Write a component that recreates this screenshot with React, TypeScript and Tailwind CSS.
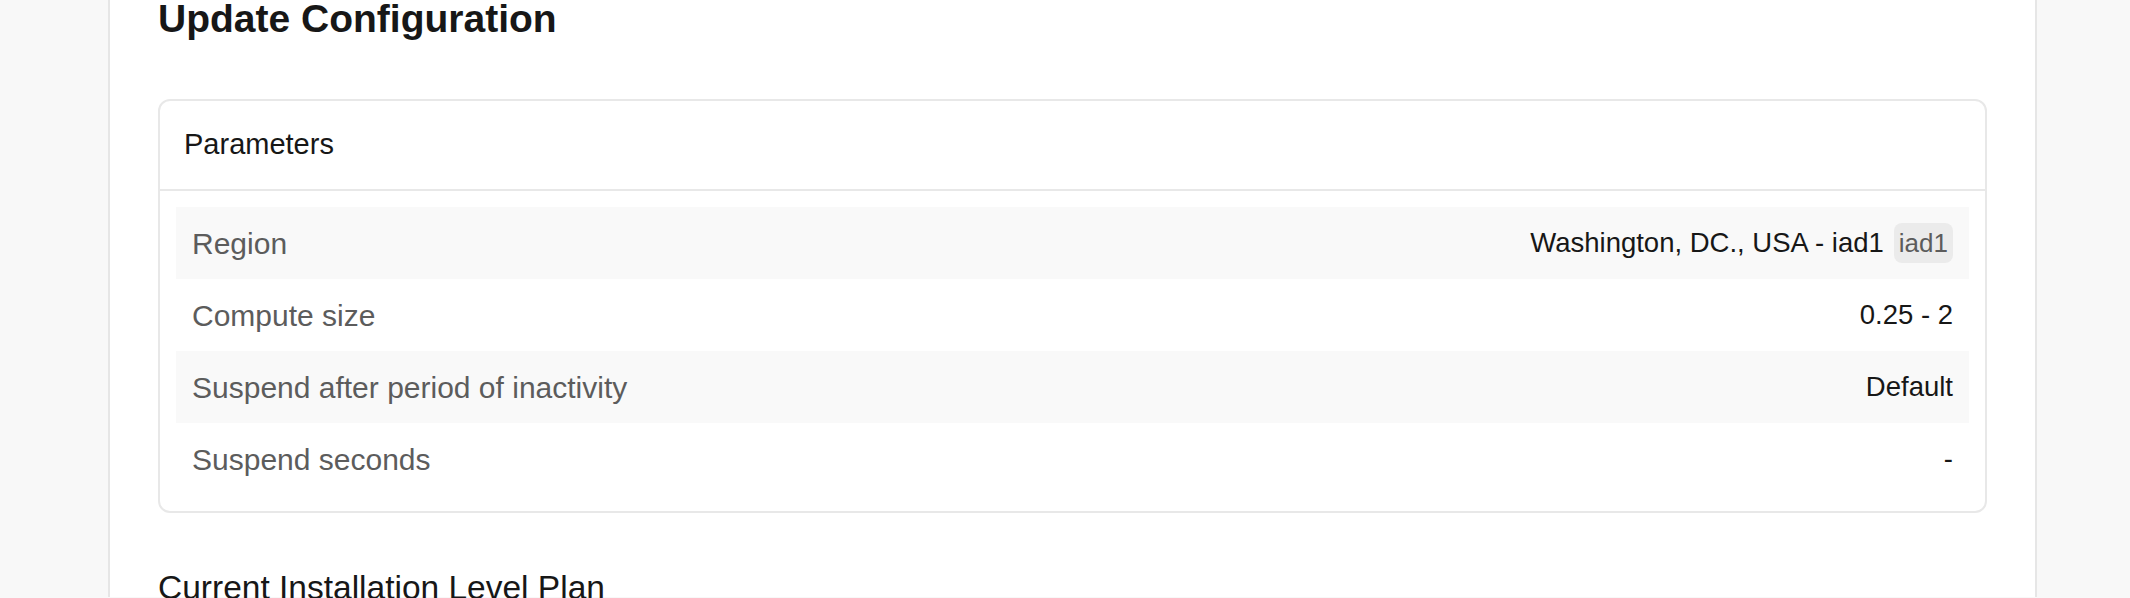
const params = [
  { label: "Region", value: "Washington, DC., USA - iad1", badge: "iad1" },
  { label: "Compute size", value: "0.25 - 2" },
  { label: "Suspend after period of inactivity", value: "Default" },
  { label: "Suspend seconds", value: "-" },
];

export default function App() {
  return (
    <div
      className="min-h-[598px] h-[598px] overflow-hidden bg-[#f8f8f8] text-[#171717]"
      style={{ fontFamily: '"Liberation Sans", Arial, sans-serif' }}
    >
      <div className="ml-[108px] w-[1929px] h-full bg-white border-x-2 border-[#e6e6e6] px-[48px]">
        <h1 className="text-[39px] leading-none font-bold -mt-[1px] text-[#171717]">
          Update Configuration
        </h1>

        <div className="mt-[61px] border-2 border-[#e8e8e8] rounded-[12px]">
          <div className="h-[90px] flex items-center px-[24px] border-b-2 border-[#e8e8e8]">
            <span className="text-[29px]">Parameters</span>
          </div>
          <div className="p-[16px]">
            {params.map((p, i) => (
              <div
                key={p.label}
                className={`h-[72px] flex items-center justify-between px-[16px] ${
                  i % 2 === 0 ? "bg-[#f9f9f9]" : "bg-white"
                }`}
              >
                <span className="text-[30px] text-[#5c5c5c]">{p.label}</span>
                <div className="flex items-center gap-[10px]">
                  <span className="text-[27.5px] text-[#171717]">{p.value}</span>
                  {p.badge && (
                    <span className="h-[40px] flex items-center px-[5px] rounded-[8px] bg-[#ebebeb] text-[26px] text-[#5c5c5c]">
                      {p.badge}
                    </span>
                  )}
                </div>
              </div>
            ))}
          </div>
        </div>

        <h2 className="mt-[50px] text-[33.5px] text-[#171717]">Current Installation Level Plan</h2>
      </div>
    </div>
  );
}
